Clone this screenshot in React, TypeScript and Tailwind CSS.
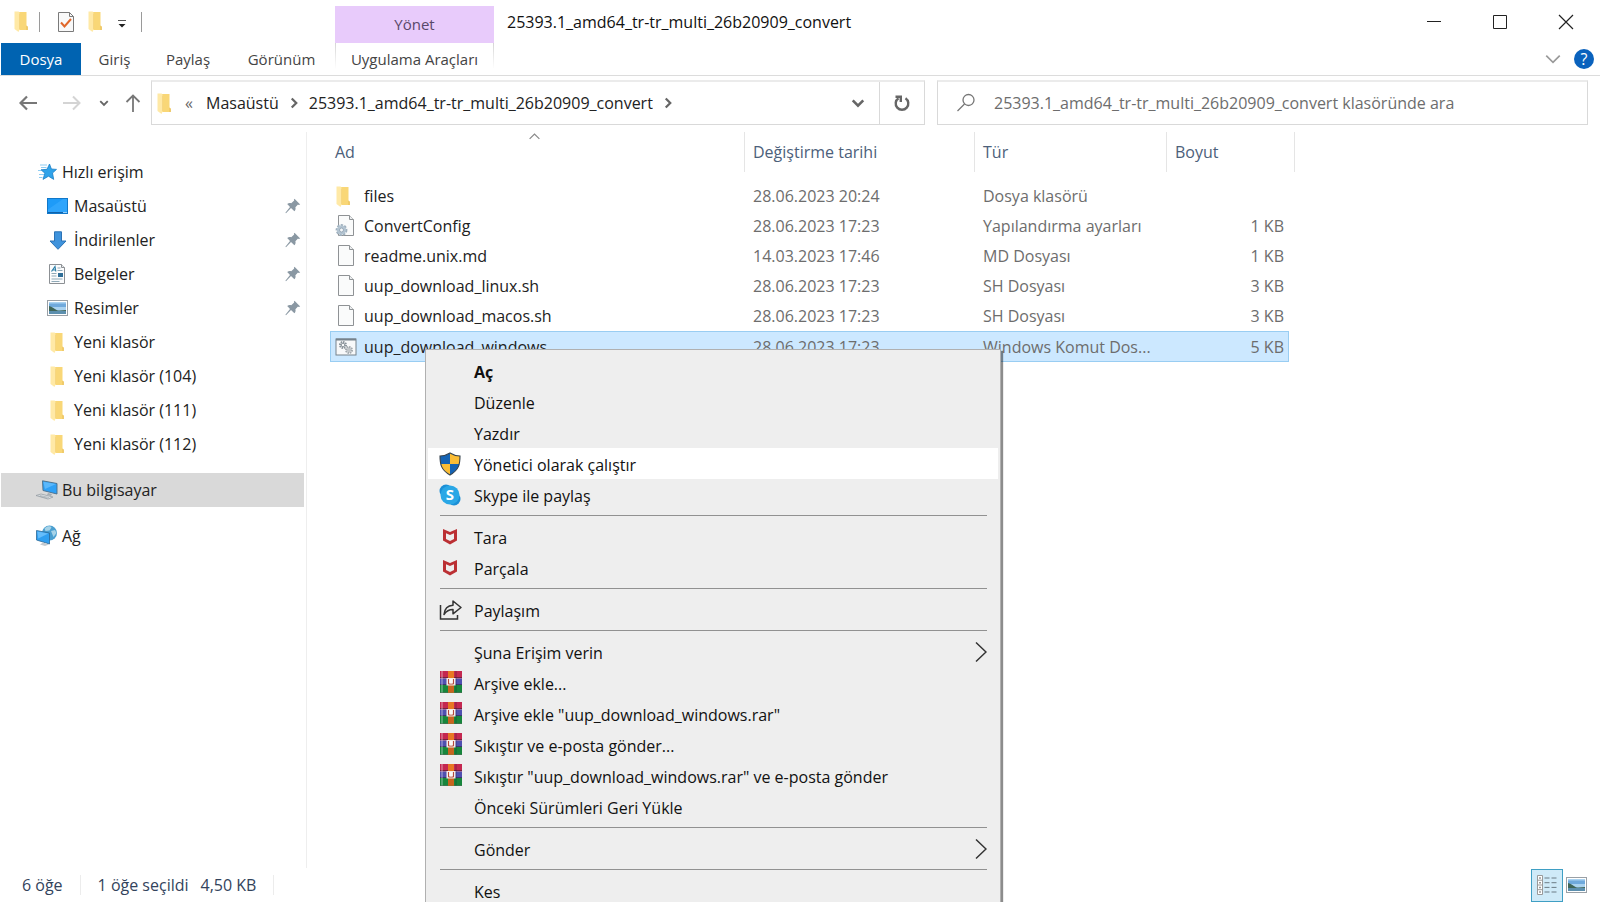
import type { ReactNode } from 'react';

const FolderIcon = () => (
  <svg width="16" height="21" viewBox="0 0 16 21" className="shrink-0">
    <path d="M5 1h8.500v13.500l1.200 1.200v3.300H5z" fill="#f9d777" />
    <path d="M13.500 14.500l1.200 1.200v3.300h-1.200z" fill="#e9c05c" />
    <path d="M1.500 .5h4.200l1.300 2v15L5.500 21 1.500 18z" fill="#ffe9a6" />
    <path d="M6.500 2.500v15.500" stroke="#f0ca68" strokeWidth=".6" />
  </svg>
);

const StarIcon = () => (
  <svg width="20" height="18" viewBox="0 0 20 18" className="shrink-0">
    <path d="M11.500 1l1.900 5 5.100.4-4 3.600 1.200 6.400-5.200-3.200-5.500 3.200 1.900-6.200L3 6.800l6-.5z" fill="#2fa3ea" stroke="#1b7fc6" strokeWidth=".8" />
    <path d="M2 2h7M3 4.500h5.500M0 7.500h3M1 11.500h5M1 14.500h3.500" stroke="#8fcdf3" strokeWidth="1" />
  </svg>
);

const DesktopIcon = () => (
  <svg width="22" height="18" viewBox="0 0 22 18" className="shrink-0">
    <rect x=".5" y="1.500" width="20" height="15" fill="#1e9bf8" stroke="#1178c9" />
    <path d="M1 12.500L16 2h4v13H1z" fill="#3aabff" opacity=".6" />
    <path d="M1 15.500h15" stroke="#0f62ab" />
    <path d="M16.500 15.500h1m1 0h1" stroke="#fff" />
  </svg>
);

const DownloadIcon = () => (
  <svg width="22" height="19" viewBox="0 0 22 19" className="shrink-0">
    <path d="M7.500 .8h7v9.200h4.500L11 18.300 3 10h4.500z" fill="#3f93dc" stroke="#2c72b5" />
  </svg>
);

const DocumentsIcon = () => (
  <svg width="22" height="22" viewBox="0 0 22 22" className="shrink-0">
    <path d="M2.500 1.500h12l3 3v16h-15z" fill="#fbfcfd" stroke="#8c9094" />
    <path d="M14.500 1.500v3h3" fill="#e6e9ec" stroke="#8c9094" />
    <path d="M4.500 8.500l3.500-5 .8 5M5.500 7h3" fill="none" stroke="#2d7fa8" strokeWidth="1.200" />
    <path d="M10.500 5h3M10.500 7.500h5M4.500 10.500h5M4.500 13h5M4.500 16h11M4.500 18.500h8" stroke="#8fa9b7" />
    <rect x="11" y="10" width="5" height="4" fill="#2f6e98" />
  </svg>
);

const PictureIcon = () => (
  <svg width="22" height="17" viewBox="0 0 22 17" className="shrink-0">
    <rect x=".5" y=".5" width="20" height="15" fill="#fff" stroke="#9aa0a6" />
    <rect x="2" y="2" width="17" height="12" fill="#a9d2f0" />
    <path d="M2 3.500h17v3.500H2z" fill="#6fa9dc" />
    <path d="M2 6c3 .5 5 3 8 4.200 3 .9 6-.2 9-.2v1.500H2z" fill="#3f6557" />
    <path d="M2 11h17v3H2z" fill="#5c8fae" />
  </svg>
);

const ComputerIcon = () => (
  <svg width="22" height="20" viewBox="0 0 22 20" className="shrink-0">
    <path d="M6.500 .8l14.500 2.700V14L7 10.500z" fill="#2fa0f5" stroke="#4b6d88" strokeWidth=".9" />
    <path d="M7.300 1.700L20 4 9 9z" fill="#6cc2ff" opacity=".7" />
    <path d="M0 15.500l5-1.500 12 3-5 2z" fill="#dfe3e6" stroke="#8e979e" strokeWidth=".7" />
    <path d="M4 15.500l9 2M2.500 16l9 2.200" stroke="#9aa3aa" strokeWidth=".6" />
    <path d="M12 13l4 1-1 2-4-1z" fill="#a5adb3" />
  </svg>
);

const NetworkIcon = () => (
  <svg width="22" height="22" viewBox="0 0 22 22" className="shrink-0">
    <circle cx="13.500" cy="8" r="7.500" fill="#4a9fd0" />
    <path d="M8.500 3.500c3-3 6-2.500 7-1l-2 3-4 .5zM15 6l4-1 1.500 3-3 4z" fill="#a6d3e8" />
    <path d="M.5 5.500l13 2.500v11l-13-4z" fill="#2f9ff0" stroke="#2c6896" strokeWidth=".8" />
    <path d="M1.300 6.500l11 2.100-10 5z" fill="#7ccaff" opacity=".7" />
    <path d="M4 19.500l3-2 6 2-4 1.500z" fill="#c3cad0" />
  </svg>
);

const PinIcon = () => (
  <svg width="16" height="16" viewBox="0 0 16 16" className="shrink-0">
    <path d="M9.500 .8l5.700 5.600-1.600.5-.6-.3-2.600 2.700c.5 1.600 0 3-1 4L6 10 1 15.300l-.6-.6L5 9 2.200 6c1.200-1 2.700-1.200 4-.7l3-2.700-.3-.8z" fill="#8a98a3" />
  </svg>
);

const FileIcon = ({ children }: { children?: ReactNode }) => (
  <svg width="22" height="24" viewBox="0 0 22 24" className="shrink-0">
    <path d="M3.500 1.500h11l4 4v16h-15z" fill="#fafbfb" stroke="#8f9295" />
    <path d="M14.500 1.500v4h4" fill="#eceeef" stroke="#8f9295" />
    {children}
  </svg>
);

const ConfigIcon = () => (
  <FileIcon>
    <circle cx="6.500" cy="16" r="4.600" fill="#c9d5df" stroke="#9fb0be" strokeWidth="2.600" strokeDasharray="2.200 1.200" />
    <circle cx="6.500" cy="16" r="4.500" fill="#b3c4d1" />
    <circle cx="6.500" cy="16" r="2" fill="#f3f6f8" stroke="#8297a7" strokeWidth=".7" />
  </FileIcon>
);

const BatchIcon = () => (
  <svg width="22" height="18" viewBox="0 0 22 18" className="shrink-0">
    <rect x="1" y="1" width="20" height="16" fill="#f8f9fa" stroke="#76828c" />
    <path d="M1 1.500h20" stroke="#76828c" strokeWidth="2" />
    <circle cx="8" cy="7" r="3" fill="none" stroke="#8a939a" strokeWidth="2" strokeDasharray="1.500 .8" />
    <circle cx="8" cy="7" r="1.800" fill="none" stroke="#8a939a" />
    <circle cx="14" cy="12" r="3" fill="#dadde0" stroke="#a3a9ae" strokeWidth="2" strokeDasharray="1.500 .8" />
    <circle cx="14" cy="12" r="1.200" fill="#fff" stroke="#a3a9ae" />
  </svg>
);

const ShieldIcon = () => (
  <svg width="22" height="24" viewBox="0 0 22 24">
    <clipPath id="shield">
      <path d="M11 1c3 2 6 2.800 10 3 0 8-1 14-10 19C2 18 1 12 1 4c4-.2 7-1 10-3z" />
    </clipPath>
    <g clipPath="url(#shield)">
      <path d="M0 0h11v12H0zM11 12h11v12H11z" fill="#1463b4" />
      <path d="M11 0h11v12H11zM0 12h11v12H0z" fill="#fbbd35" />
    </g>
    <path d="M11 1c3 2 6 2.800 10 3 0 8-1 14-10 19C2 18 1 12 1 4c4-.2 7-1 10-3z" fill="none" stroke="#35424d" strokeWidth="1.100" />
  </svg>
);

const SkypeIcon = () => (
  <svg width="22" height="22" viewBox="0 0 22 22">
    <circle cx="7" cy="7" r="6.500" fill="#1b8fd6" />
    <circle cx="15" cy="15" r="6.500" fill="#1b8fd6" />
    <circle cx="11" cy="11" r="9.500" fill="#2aa7e6" />
    <text x="11" y="16" textAnchor="middle" fontSize="15" fontWeight="700" fill="#fff" fontFamily="Open Sans, sans-serif">S</text>
  </svg>
);

const McAfeeIcon = () => (
  <svg width="22" height="22" viewBox="0 0 22 22">
    <path fillRule="evenodd" fill="#bb2f33" d="M4 3l7 3 7-3v11.500L11 18.500 4 14.500zM7 7.300v5.600l4 2.200 4-2.200V7.300l-4 1.800z" />
  </svg>
);

const ShareIcon = () => (
  <svg width="24" height="22" viewBox="0 0 24 22" fill="none" stroke="#333" strokeWidth="1.500">
    <path d="M1.500 6v14h17v-4" />
    <path d="M5 15.500c.5-5.500 3.500-9 9-9.300V2l8 6.500-8 6.300v-4.200c-4 0-6.500 1.200-9 4.900z" strokeLinejoin="round" />
  </svg>
);

const RarIcon = () => (
  <svg width="24" height="26" viewBox="0 0 24 26">
    <path d="M1 1h22v7.500H1z" fill="#c42750" />
    <path d="M1 8.500h22V15H1z" fill="#4f50b0" />
    <path d="M1 15h22v7.500H1z" fill="#17863c" />
    <path d="M1 7.500h22M1 14.500h22" stroke="#2a1c30" opacity=".5" />
    <path d="M1 22.500h22" stroke="#0c4a20" opacity=".6" />
    <path d="M3 1v21.500" stroke="#fff" strokeWidth="1.500" opacity=".35" />
    <path d="M17 1v21.500" stroke="#1c1c2c" strokeWidth="1" opacity=".35" />
    <path d="M9 1h6v21.500H9z" fill="#e87724" />
    <path d="M9 15h6v7.500H9z" fill="#c8641f" />
    <path d="M7.500 8h9v7.500h-9z" fill="#f4ebe8" />
    <path d="M9.500 9v5h5V9" fill="none" stroke="#b5483a" strokeWidth="1" />
    <path d="M12 9v4.500" stroke="#fff" strokeWidth="1.500" />
  </svg>
);

type ChevronProps = { dir: 'down' | 'right' | 'up'; size?: number; width?: number; className?: string };

const chevronPaths = { down: 'M2 5l6 6 6-6', right: 'M5 2l6 6-6 6', up: 'M2 11l6-6 6 6' };

const Chevron = ({ dir, size = 12, width = 3, className = 'text-[#666]' }: ChevronProps) => (
  <svg width={size} height={size} viewBox="0 0 16 16" fill="none" stroke="currentColor" strokeWidth={width} className={`shrink-0 ${className}`}>
    <path d={chevronPaths[dir]} />
  </svg>
);

const quickAccess = [
  { label: 'Masaüstü', icon: <DesktopIcon />, pinned: true },
  { label: 'İndirilenler', icon: <DownloadIcon />, pinned: true },
  { label: 'Belgeler', icon: <DocumentsIcon />, pinned: true },
  { label: 'Resimler', icon: <PictureIcon />, pinned: true },
  { label: 'Yeni klasör', icon: <FolderIcon />, pinned: false },
  { label: 'Yeni klasör (104)', icon: <FolderIcon />, pinned: false },
  { label: 'Yeni klasör (111)', icon: <FolderIcon />, pinned: false },
  { label: 'Yeni klasör (112)', icon: <FolderIcon />, pinned: false },
];

const files = [
  { name: 'files', date: '28.06.2023 20:24', type: 'Dosya klasörü', size: '', icon: <FolderIcon /> },
  { name: 'ConvertConfig', date: '28.06.2023 17:23', type: 'Yapılandırma ayarları', size: '1 KB', icon: <ConfigIcon /> },
  { name: 'readme.unix.md', date: '14.03.2023 17:46', type: 'MD Dosyası', size: '1 KB', icon: <FileIcon /> },
  { name: 'uup_download_linux.sh', date: '28.06.2023 17:23', type: 'SH Dosyası', size: '3 KB', icon: <FileIcon /> },
  { name: 'uup_download_macos.sh', date: '28.06.2023 17:23', type: 'SH Dosyası', size: '3 KB', icon: <FileIcon /> },
  { name: 'uup_download_windows', date: '28.06.2023 17:23', type: 'Windows Komut Dos...', size: '5 KB', icon: <BatchIcon />, selected: true },
];

type MenuItem = { label: string; icon?: ReactNode; bold?: boolean; active?: boolean; submenu?: boolean };

const menuGroups: MenuItem[][] = [
  [
    { label: 'Aç', bold: true },
    { label: 'Düzenle' },
    { label: 'Yazdır' },
    { label: 'Yönetici olarak çalıştır', icon: <ShieldIcon />, active: true },
    { label: 'Skype ile paylaş', icon: <SkypeIcon /> },
  ],
  [
    { label: 'Tara', icon: <McAfeeIcon /> },
    { label: 'Parçala', icon: <McAfeeIcon /> },
  ],
  [{ label: 'Paylaşım', icon: <ShareIcon /> }],
  [
    { label: 'Şuna Erişim verin', submenu: true },
    { label: 'Arşive ekle...', icon: <RarIcon /> },
    { label: 'Arşive ekle "uup_download_windows.rar"', icon: <RarIcon /> },
    { label: 'Sıkıştır ve e-posta gönder...', icon: <RarIcon /> },
    { label: 'Sıkıştır "uup_download_windows.rar" ve e-posta gönder', icon: <RarIcon /> },
    { label: 'Önceki Sürümleri Geri Yükle' },
  ],
  [{ label: 'Gönder', submenu: true }],
  [{ label: 'Kes' }],
];

function TitleBar() {
  return (
    <div className="flex h-[43px]">
      <div className="flex w-[335px] shrink-0 items-center pl-[13px]">
        <FolderIcon />
        <div className="ml-2.5 h-5 w-px bg-[#9a9a9a]" />
        <button aria-label="Özellikler" className="ml-[17px]">
          <svg width="18" height="22" viewBox="0 0 18 22">
            <path d="M1.500 1.500h11l4 4v15h-15z" fill="#f9f9f9" stroke="#7a7a7a" />
            <path d="M12.500 1.500v4h4" fill="none" stroke="#7a7a7a" />
            <path d="M4 11.500l3.500 4L14 8" fill="none" stroke="#e0672a" strokeWidth="2" />
          </svg>
        </button>
        <button aria-label="Yeni klasör" className="ml-3">
          <FolderIcon />
        </button>
        <button aria-label="Hızlı Erişim Araç Çubuğunu Özelleştir" className="ml-3.5 pt-1">
          <svg width="10" height="10" viewBox="0 0 10 10">
            <path d="M1 1.500h8" stroke="#555" />
            <path d="M1.500 5h7L5 8.500z" fill="#222" />
          </svg>
        </button>
        <div className="ml-3.5 h-5 w-px bg-[#9a9a9a]" />
      </div>
      <div className="flex w-[159px] shrink-0 flex-col justify-end">
        <div className="flex h-[37px] items-center justify-center bg-[#e8cbfb] text-[15px] text-[#58486a]">Yönet</div>
      </div>
      <h1 className="pt-2.5 pl-[13px] text-base leading-6 text-[#111]">25393.1_amd64_tr-tr_multi_26b20909_convert</h1>
      <div className="ml-auto flex pr-px">
        <button aria-label="Simge durumuna küçült" className="flex w-[66px] items-center justify-center">
          <svg width="16" height="16" viewBox="0 0 16 16" stroke="#222"><path d="M1 7.500h14" /></svg>
        </button>
        <button aria-label="Ekranı kapla" className="flex w-[66px] items-center justify-center">
          <svg width="16" height="16" viewBox="0 0 16 16" fill="none" stroke="#222"><path d="M1.500 1.500h13v13h-13z" /></svg>
        </button>
        <button aria-label="Kapat" className="flex w-[66px] items-center justify-center">
          <svg width="16" height="16" viewBox="0 0 16 16" stroke="#222" strokeWidth="1.200"><path d="M1 1l14 14M15 1L1 15" /></svg>
        </button>
      </div>
    </div>
  );
}

function Ribbon() {
  return (
    <div className="flex h-[33px] border-b border-[#dcdcdc] text-[15px] text-[#444]">
      <button className="ml-px w-20 bg-[#0063b1] text-white">Dosya</button>
      <button className="w-[67px]">Giriş</button>
      <button className="w-20">Paylaş</button>
      <button className="w-[107px]">Görünüm</button>
      <div className="flex w-[159px]">
        <div className="h-[26px] w-px bg-linear-to-b from-[#d5d5d5] to-white" />
        <button className="flex-1 whitespace-nowrap">Uygulama Araçları</button>
        <div className="h-[26px] w-px bg-linear-to-b from-[#d5d5d5] to-white" />
      </div>
      <div className="ml-auto flex items-center gap-3 pr-1.5">
        <button aria-label="Şeridi genişlet">
          <Chevron dir="down" size={18} width={1.5} className="text-[#9a9a9a]" />
        </button>
        <button aria-label="Yardım" className="flex size-5 items-center justify-center rounded-full bg-[#0a62bd] text-base text-white">?</button>
      </div>
    </div>
  );
}

function AddressBar() {
  return (
    <div className="flex h-[49px] items-start pt-1 pr-3">
      <div className="flex h-[45px] w-[151px] shrink-0 items-center pl-[19px] text-[#777]">
        <button aria-label="Geri">
          <svg width="19" height="16" viewBox="0 0 19 16" fill="none" stroke="currentColor" strokeWidth="2.200"><path d="M18 8H2M8 1.500L1.500 8 8 14.500" /></svg>
        </button>
        <button aria-label="İleri" className="ml-6 text-[#d4d4d4]">
          <svg width="19" height="16" viewBox="0 0 19 16" fill="none" stroke="currentColor" strokeWidth="2"><path d="M1 8h16M11 1.500L17.500 8 11 14.500" /></svg>
        </button>
        <button aria-label="Son konumlar" className="ml-[18px]">
          <Chevron dir="down" size={10} />
        </button>
        <button aria-label="Yukarı" className="ml-4">
          <svg width="16" height="20" viewBox="0 0 16 20" fill="none" stroke="currentColor" strokeWidth="1.800"><path d="M8 19V2.500M1.500 9L8 2.500 14.500 9" /></svg>
        </button>
      </div>
      <div className="grid min-w-0 flex-1 grid-cols-[774fr_651fr] gap-3">
        <div className="flex h-[45px] min-w-0 border border-t-2 border-[#d9d9d9] border-t-[#ebebeb]">
          <div className="flex min-w-0 flex-1 items-center pl-1">
            <FolderIcon />
            <span className="w-[34px] text-center text-base text-[#666]">«</span>
            <a href="#" className="text-base text-[#222]">Masaüstü</a>
            <span className="flex w-[30px] justify-center"><Chevron dir="right" /></span>
            <a href="#" className="truncate text-base text-[#222]">25393.1_amd64_tr-tr_multi_26b20909_convert</a>
            <span className="flex w-[30px] justify-center"><Chevron dir="right" /></span>
          </div>
          <button aria-label="Önceki konumlar" className="w-10 pl-3">
            <Chevron dir="down" size={14} />
          </button>
          <button aria-label="Yenile" className="flex w-[45px] items-center justify-center border-l border-[#d9d9d9]">
            <svg width="18" height="18" viewBox="0 0 18 18" fill="none" stroke="#666" strokeWidth="2.400">
              <path d="M12.500 4.200a6.300 6.300 0 1 1-7 0" />
              <path d="M2.500 2.800h5.300v5.300" />
            </svg>
          </button>
        </div>
        <label className="flex h-[45px] min-w-0 items-center border border-t-2 border-[#d9d9d9] border-t-[#ebebeb] pl-[18px]">
          <svg width="20" height="20" viewBox="0 0 20 20" fill="none" stroke="#777" strokeWidth="1.300" className="shrink-0">
            <circle cx="12.500" cy="7" r="5.500" />
            <path d="M8.500 11L1.500 18" />
          </svg>
          <input
            type="search"
            aria-label="Klasörde ara"
            placeholder="25393.1_amd64_tr-tr_multi_26b20909_convert klasöründe ara"
            className="ml-[18px] min-w-0 flex-1 text-base text-[#222] outline-none placeholder:text-[#6d6d6d]"
          />
        </label>
      </div>
    </div>
  );
}

function Sidebar() {
  return (
    <nav className="w-[306px] shrink-0 pt-[23px] text-base text-[#222]">
      <a href="#" className="flex h-[34px] items-center pl-[38px]">
        <span className="flex w-6"><StarIcon /></span>
        Hızlı erişim
      </a>
      {quickAccess.map(item => (
        <a key={item.label} href="#" className="flex h-[34px] items-center pr-[5px] pl-[47px]">
          <span className="flex w-[27px]">
            {item.pinned ? item.icon : <span className="pl-0.5">{item.icon}</span>}
          </span>
          <span className="flex-1">{item.label}</span>
          {item.pinned && <PinIcon />}
        </a>
      ))}
      <a href="#" className="mt-3 mr-0.5 ml-px flex h-[34px] items-center bg-[#d9d9d9] pl-[35px]">
        <span className="flex w-[26px]"><ComputerIcon /></span>
        Bu bilgisayar
      </a>
      <a href="#" className="mt-3 flex h-[34px] items-center pl-9">
        <span className="flex w-[26px]"><NetworkIcon /></span>
        Ağ
      </a>
    </nav>
  );
}

function FileTable() {
  return (
    <table className="w-[965px] table-fixed border-separate border-spacing-0 text-base text-[#6d6d6d]">
      <colgroup>
        <col className="w-[415px]" />
        <col className="w-[230px]" />
        <col className="w-48" />
        <col className="w-[122px]" />
        <col className="w-1.5" />
      </colgroup>
      <thead>
        <tr className="h-10 text-left text-[#4c607a]">
          <th className="relative border-r border-[#e5e5e5] pl-[5px] font-normal">
            <Chevron dir="up" size={13} width={1.5} className="absolute -top-0.5 left-[198px] text-[#888]" />
            Ad
          </th>
          <th className="border-r border-[#e5e5e5] pl-2 font-normal">Değiştirme tarihi</th>
          <th className="border-r border-[#e5e5e5] pl-2 font-normal">Tür</th>
          <th colSpan={2} className="border-r border-[#e5e5e5] pl-2 font-normal">Boyut</th>
        </tr>
        <tr aria-hidden="true" className="h-[9px]" />
      </thead>
      <tbody>
        {files.map(f => {
          const cell = f.selected ? 'border-y border-[#99cdf2] bg-[#cce8ff]' : '';
          return (
            <tr key={f.name} className={f.selected ? 'h-[31px]' : 'h-[30px]'}>
              <td className={`${cell} ${f.selected ? 'border-l pl-1' : 'pl-[5px]'}`}>
                <div className="flex h-7 items-center text-[#222]">
                  <span className="flex w-[29px]">{f.icon}</span>
                  {f.name}
                </div>
              </td>
              <td className={`${cell} pl-2`}>{f.date}</td>
              <td className={`${cell} pl-2 whitespace-nowrap`}>{f.type}</td>
              <td className={`${cell} text-right ${f.selected ? 'border-r pr-1' : 'pr-[5px]'}`}>{f.size}</td>
              <td />
            </tr>
          );
        })}
      </tbody>
    </table>
  );
}

function StatusBar() {
  return (
    <footer className="flex h-[34px] items-center pr-3 pl-[22px] text-base text-[#33435c]">
      <span>6 öğe</span>
      <div className="mx-[17px] h-5 w-px bg-[#ececec]" />
      <span>1 öğe seçildi</span>
      <span className="ml-3">4,50 KB</span>
      <div className="ml-[17px] h-5 w-px bg-[#ececec]" />
      <div className="ml-auto flex items-center gap-[3px]">
        <button aria-label="Ayrıntılar" className="flex h-[33px] w-8 items-center justify-center border border-[#3f9fc4] bg-[#cfeaf8]">
          <svg width="22" height="22" viewBox="0 0 22 22" fill="none">
            <path d="M1.500 1.500h5v19h-5zM1.500 6.200h5M1.500 11h5M1.500 15.700h5" fill="#fff" stroke="#999" />
            <path d="M3.500 4h1M3.500 8.700h1M3.500 13.400h1M3.500 18h1" stroke="#333" strokeWidth="1.500" />
            <path d="M8.500 4h5M15.500 4h5M8.500 8.700h5M15.500 8.700h5M8.500 13.400h5M15.500 13.400h5M8.500 18h5M15.500 18h5" stroke="#6d7d86" />
          </svg>
        </button>
        <button aria-label="Büyük simgeler"><PictureIcon /></button>
      </div>
    </footer>
  );
}

function ContextMenu() {
  return (
    <div role="menu" className="absolute top-[349px] left-[425px] w-[576px] border border-[#b0b0b0] bg-[#eeeeee] px-0.5 pt-[5px] text-base text-[#111] shadow-[2px_2px_1px_rgba(0,0,0,0.45)]">
      {menuGroups.map((group, i) => (
        <div key={i}>
          {i > 0 && (
            <div className="flex h-[11px] items-center pr-[11px] pl-3">
              <hr className="w-full border-t border-[#919191]" />
            </div>
          )}
          {group.map(item => (
            <button
              key={item.label}
              role="menuitem"
              className={`flex h-[31px] w-full items-center px-[11px] text-left ${item.active ? 'bg-white' : ''}`}
            >
              <span className="flex w-[35px] shrink-0">{item.icon}</span>
              <span className={`flex-1 pt-0.5 ${item.bold ? 'font-bold' : ''}`}>{item.label}</span>
              {item.submenu && (
                <svg width="12" height="22" viewBox="0 0 12 22" fill="none" stroke="#333" strokeWidth="1.500">
                  <path d="M1 1.500l10 9.500-10 9.500" />
                </svg>
              )}
            </button>
          ))}
        </div>
      ))}
    </div>
  );
}

export default function App() {
  return (
    <div className="relative flex h-screen w-full flex-col overflow-hidden bg-white font-['Open_Sans','Noto_Sans',sans-serif]">
      <header>
        <TitleBar />
        <Ribbon />
        <AddressBar />
      </header>
      <div className="flex min-h-0 flex-1 pt-[7px]">
        <Sidebar />
        <main className="min-w-0 flex-1 border-l border-[#eeeeee] pl-[23px]">
          <FileTable />
        </main>
      </div>
      <StatusBar />
      <ContextMenu />
    </div>
  );
}
